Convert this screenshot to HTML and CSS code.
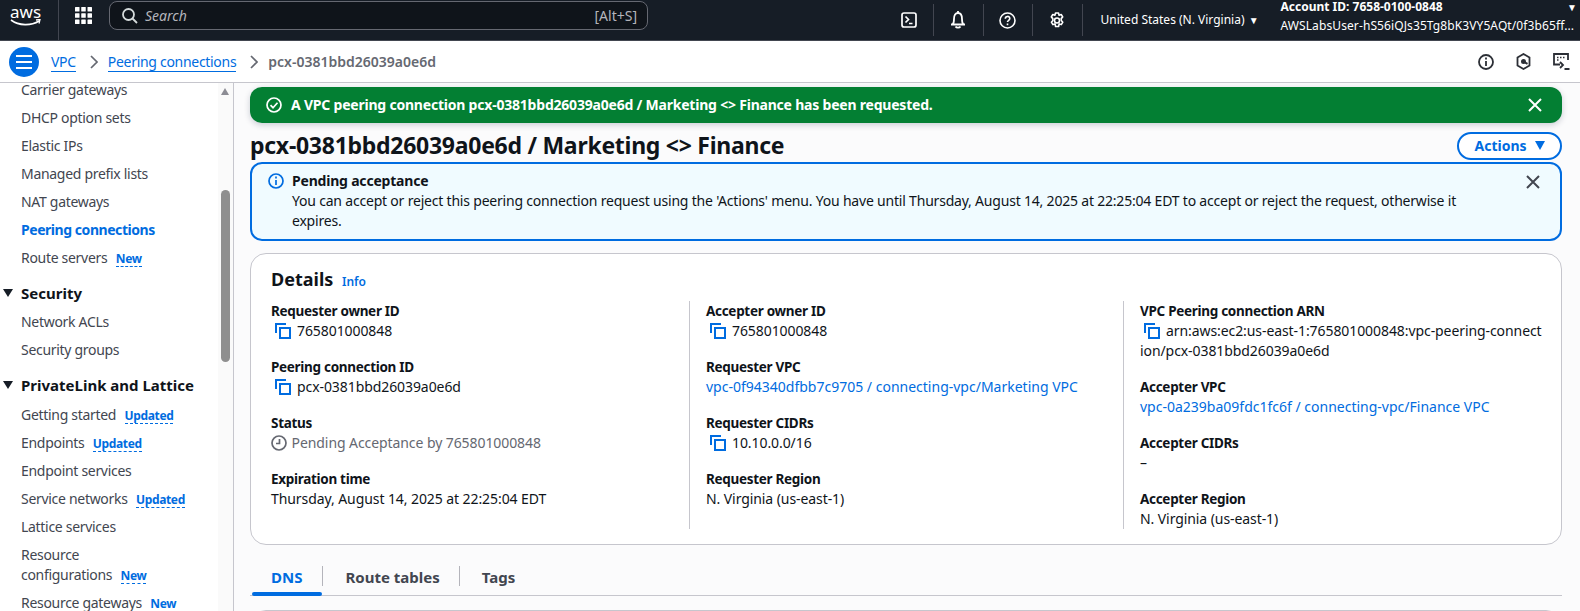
FILE: index.html
```html
<!DOCTYPE html>
<html>
<head>
    <title>Peering connection details</title>
    <link rel="stylesheet" href="styles.css">
</head>
<body>
    <svg class="defs" width="0" height="0">
        <symbol id="copy" viewBox="0 0 16 16">
            <path d="M1 10V1h10" fill="none" stroke="currentColor" stroke-width="2"/>
            <rect x="5" y="5" width="10" height="10" fill="none" stroke="currentColor" stroke-width="2"/>
        </symbol>
        <symbol id="close" viewBox="0 0 16 16">
            <path d="M2 2l12 12M14 2L2 14" fill="none" stroke="currentColor" stroke-width="2"/>
        </symbol>
    </svg>

    <header class="topbar">
        <div class="aws-logo">
            <span class="aws-word">aws</span>
            <svg width="32" height="8" viewBox="0 0 32 8"><path d="M1 1c8 6 20 6 28 1" fill="none" stroke="#fff" stroke-width="1.6"/><path d="M26 1l4-.5-1 4" fill="none" stroke="#fff" stroke-width="1.3"/></svg>
        </div>
        <span class="top-sep logo-sep"></span>
        <svg class="grid-icon" width="17" height="17" viewBox="0 0 17 17" fill="#fff">
            <rect x="0" y="0" width="4.500" height="4.500" rx=".5"/><rect x="6.250" y="0" width="4.500" height="4.500" rx=".5"/><rect x="12.500" y="0" width="4.500" height="4.500" rx=".5"/>
            <rect x="0" y="6.250" width="4.500" height="4.500" rx=".5"/><rect x="6.250" y="6.250" width="4.500" height="4.500" rx=".5"/><rect x="12.500" y="6.250" width="4.500" height="4.500" rx=".5"/>
            <rect x="0" y="12.500" width="4.500" height="4.500" rx=".5"/><rect x="6.250" y="12.500" width="4.500" height="4.500" rx=".5"/><rect x="12.500" y="12.500" width="4.500" height="4.500" rx=".5"/>
        </svg>
        <div class="search">
            <svg width="16" height="16" viewBox="0 0 16 16"><circle cx="6.5" cy="6.5" r="5.5" fill="none" stroke="#d5dbdb" stroke-width="1.8"/><path d="M10.5 10.5L15 15" stroke="#d5dbdb" stroke-width="1.8"/></svg>
            <span class="search-text">Search</span>
            <span class="search-key">[Alt+S]</span>
        </div>
        <div class="top-icons">
            <span class="top-icon">
                <svg width="16" height="16" viewBox="0 0 16 16" fill="none" stroke="#fff" stroke-width="1.700"><rect x="1" y="1" width="14" height="14" rx="2"/><path d="M4.500 4.500L7.500 7.500l-3 3M8 11.500h3.500"/></svg>
            </span>
            <span class="top-sep"></span>
            <span class="top-icon">
                <svg width="16" height="18" viewBox="0 0 16 18" fill="none" stroke="#fff" stroke-width="1.800"><path d="M8 0v2M1 13.500h14M2.500 13.500c1.200-1 1.500-2 1.500-5.500C4 4 5.500 2 8 2s4 2 4 6c0 3.500.3 4.500 1.500 5.500"/><path d="M5.500 15.500c1 1.500 4 1.500 5 0"/></svg>
            </span>
            <span class="top-sep"></span>
            <span class="top-icon">
                <svg width="17" height="17" viewBox="0 0 17 17" fill="none" stroke="#fff" stroke-width="1.600"><circle cx="8.500" cy="8.500" r="7.500"/><path d="M6.300 6.700c0-3 4.500-3 4.500-.2 0 1.800-2.300 1.800-2.300 3.600"/><path d="M8.500 11.500v1.700"/></svg>
            </span>
            <span class="top-sep"></span>
            <span class="top-icon">
                <svg width="16" height="17" viewBox="0 0 16 17" fill="none" stroke="#fff" stroke-width="1.600" stroke-linejoin="round"><path d="M6.500 1h3l.6 2.200 2.100-.7 1.500 2.400-1.500 1.700.1 1.900 1.500 1.700-1.500 2.400-2.100-.7-.6 2.600h-3l-.6-2.600-2.100.7-1.500-2.400 1.500-1.700-.1-1.900-1.500-1.700 1.500-2.400 2.100.7z"/><circle cx="8" cy="8.500" r="2.500"/></svg>
            </span>
            <span class="top-sep"></span>
        </div>
        <div class="region">United States (N. Virginia) <span class="caret">▼</span></div>
        <div class="account">
            <div class="account-id">Account ID: 7658-0100-0848</div>
            <div class="account-user">AWSLabsUser-hS56iQJs35Tg8bK3VY5AQt/0f3b65ff...</div>
        </div>
        <span class="account-caret">▼</span>
    </header>

    <nav class="crumbbar">
        <button class="burger"><span></span><span></span><span></span></button>
        <a class="crumb vpc-crumb">VPC</a>
        <svg class="chev" width="8" height="14" viewBox="0 0 8 14"><path d="M1 1l6 6-6 6" fill="none" stroke="#656871" stroke-width="1.700"/></svg>
        <a class="crumb">Peering connections</a>
        <svg class="chev" width="8" height="14" viewBox="0 0 8 14"><path d="M1 1l6 6-6 6" fill="none" stroke="#656871" stroke-width="1.700"/></svg>
        <span class="crumb-current">pcx-0381bbd26039a0e6d</span>
        <div class="crumb-icons">
            <svg width="16" height="16" viewBox="0 0 16 16" fill="none" stroke="#2c2f36" stroke-width="1.800"><circle cx="8" cy="8" r="7"/><path d="M8 7v5M8 3.500v2"/></svg>
            <svg width="15" height="17" viewBox="0 0 15 17" fill="none" stroke="#2c2f36" stroke-width="1.800"><path d="M7.500 1l6 3.500v8l-6 3.500-6-3.500v-8z"/><circle cx="7.500" cy="8.500" r="2.500" fill="#2c2f36" stroke="none"/><path d="M7.500 8.500l4 2.300" stroke-width="2"/></svg>
            <svg width="17" height="17" viewBox="0 0 17 17" fill="none" stroke="#2c2f36" stroke-width="1.800"><path d="M7 11.500H1V1h14v6"/><path d="M4 4.500h1.500M7 4.500h1.500M10 4.500h1.500M4 7h1.500" stroke-width="1.500"/><path d="M7 9l3 3-3 3M11.500 16h5"/></svg>
        </div>
    </nav>

    <div class="layout">
        <aside class="sidebar">
            <ul class="nav-list first-list">
                <li>Carrier gateways</li>
                <li>DHCP option sets</li>
                <li>Elastic IPs</li>
                <li>Managed prefix lists</li>
                <li>NAT gateways</li>
                <li class="active">Peering connections</li>
                <li>Route servers <span class="badge">New</span></li>
            </ul>
            <h3 class="nav-group">Security</h3>
            <ul class="nav-list">
                <li>Network ACLs</li>
                <li>Security groups</li>
            </ul>
            <h3 class="nav-group">PrivateLink and Lattice</h3>
            <ul class="nav-list">
                <li>Getting started <span class="badge">Updated</span></li>
                <li>Endpoints <span class="badge">Updated</span></li>
                <li>Endpoint services</li>
                <li>Service networks <span class="badge">Updated</span></li>
                <li>Lattice services</li>
                <li class="wrapped">Resource<br>configurations <span class="badge">New</span></li>
                <li>Resource gateways <span class="badge">New</span></li>
            </ul>
            <div class="scroll-track">
                <span class="scroll-up"></span>
                <span class="scroll-thumb"></span>
            </div>
        </aside>

        <main class="content">
            <div class="flash">
                <svg width="16" height="16" viewBox="0 0 16 16" fill="none" stroke="#fff" stroke-width="1.700"><circle cx="8" cy="8" r="7"/><path d="M4.500 8.200l2.500 2.500 4.500-5"/></svg>
                <span class="flash-text">A VPC peering connection pcx-0381bbd26039a0e6d / Marketing &lt;&gt; Finance has been requested.</span>
                <svg class="close" width="16" height="16"><use href="#close"/></svg>
            </div>

            <div class="title-row">
                <h1>pcx-0381bbd26039a0e6d / Marketing &lt;&gt; Finance</h1>
                <button class="actions">Actions <span class="actions-caret"></span></button>
            </div>

            <div class="alert">
                <svg class="alert-icon" width="16" height="16" viewBox="0 0 16 16" fill="none" stroke="#006ce0" stroke-width="1.700"><circle cx="8" cy="8" r="7"/><path d="M8 7v5M8 3.500v2"/></svg>
                <div class="alert-body">
                    <div class="alert-title">Pending acceptance</div>
                    <div>You can accept or reject this peering connection request using the 'Actions' menu. You have until Thursday, August 14, 2025 at 22:25:04 EDT to accept or reject the request, otherwise it expires.</div>
                </div>
                <svg class="close dark" width="16" height="16"><use href="#close"/></svg>
            </div>

            <section class="card">
                <h2>Details <a class="info">Info</a></h2>
                <div class="columns">
                    <div class="col">
                        <div class="field">
                            <div class="label">Requester owner ID</div>
                            <div class="value"><svg class="copy"><use href="#copy"/></svg>765801000848</div>
                        </div>
                        <div class="field">
                            <div class="label">Peering connection ID</div>
                            <div class="value"><svg class="copy"><use href="#copy"/></svg>pcx-0381bbd26039a0e6d</div>
                        </div>
                        <div class="field">
                            <div class="label">Status</div>
                            <div class="value status">
                                <svg class="clock" width="16" height="16" viewBox="0 0 16 16" fill="none" stroke="#656871" stroke-width="1.700"><circle cx="8" cy="8" r="7"/><path d="M8.500 4v4.500H5"/></svg>
                                Pending Acceptance by 765801000848
                            </div>
                        </div>
                        <div class="field">
                            <div class="label">Expiration time</div>
                            <div class="value">Thursday, August 14, 2025 at 22:25:04 EDT</div>
                        </div>
                    </div>
                    <div class="col">
                        <div class="field">
                            <div class="label">Accepter owner ID</div>
                            <div class="value"><svg class="copy"><use href="#copy"/></svg>765801000848</div>
                        </div>
                        <div class="field">
                            <div class="label">Requester VPC</div>
                            <div class="value"><a class="link">vpc-0f94340dfbb7c9705 / connecting-vpc/Marketing VPC</a></div>
                        </div>
                        <div class="field">
                            <div class="label">Requester CIDRs</div>
                            <div class="value"><svg class="copy"><use href="#copy"/></svg>10.10.0.0/16</div>
                        </div>
                        <div class="field">
                            <div class="label">Requester Region</div>
                            <div class="value">N. Virginia (us-east-1)</div>
                        </div>
                    </div>
                    <div class="col">
                        <div class="field">
                            <div class="label">VPC Peering connection ARN</div>
                            <div class="value"><svg class="copy"><use href="#copy"/></svg>arn:aws:ec2:us-east-1:765801000848:vpc-peering-connect<br>ion/pcx-0381bbd26039a0e6d</div>
                        </div>
                        <div class="field">
                            <div class="label">Accepter VPC</div>
                            <div class="value"><a class="link">vpc-0a239ba09fdc1fc6f / connecting-vpc/Finance VPC</a></div>
                        </div>
                        <div class="field">
                            <div class="label">Accepter CIDRs</div>
                            <div class="value">–</div>
                        </div>
                        <div class="field">
                            <div class="label">Accepter Region</div>
                            <div class="value">N. Virginia (us-east-1)</div>
                        </div>
                    </div>
                </div>
            </section>

            <div class="tabs">
                <a class="tab selected">DNS</a>
                <a class="tab">Route tables</a>
                <a class="tab">Tags</a>
            </div>
            <div class="next-card"></div>
        </main>
    </div>
</body>
</html>
```

FILE: styles.css
```css
* {
    margin: 0;
    padding: 0;
    box-sizing: border-box;
}

html, body {
    height: 611px;
    overflow: hidden;
}

body {
    font-family: "Noto Sans", "Open Sans", sans-serif;
    font-size: 14px;
    line-height: 20px;
    color: #0f141a;
    background-color: #fbfbfc;
}

.defs {
    display: block;
    height: 0;
}

/* Top bar */
.topbar {
    display: flex;
    align-items: center;
    height: 41px;
    padding-bottom: 9px;
    background-color: #161d26;
    color: #fff;
    border-bottom: 1px solid #424650;
    position: relative;
}

.aws-logo {
    width: 58px;
    padding-left: 10px;
    display: flex;
    flex-direction: column;
    line-height: 14px;
}

.aws-word {
    font-size: 17px;
    height: 14px;
}

.aws-logo svg {
    display: block;
}

.top-sep {
    width: 1px;
    height: 32px;
    background-color: #424650;
}

.logo-sep {
    height: 40px;
    margin-top: 9px;
}

.grid-icon {
    margin: 0 17px 0 16px;
}

.search {
    width: 539px;
    height: 29px;
    border: 1.5px solid #656871;
    border-radius: 8px;
    background-color: #0f141a;
    display: flex;
    align-items: center;
    padding: 0 10px 0 12px;
    color: #b4b4bb;
    font-size: 14px;
}

.search-text {
    margin-left: 7px;
    font-style: italic;
    flex: 1;
}

.top-icons {
    display: flex;
    align-items: center;
    margin-left: 237px;
    margin-top: 9px;
}

.top-icon {
    width: 48.500px;
    height: 32px;
    display: flex;
    align-items: center;
    justify-content: center;
}

.top-icons .top-icon:first-child {
    width: 48px;
}

.region {
    margin-left: 18px;
    margin-top: 9px;
    font-size: 12px;
    width: 180px;
    white-space: nowrap;
}

.caret {
    font-size: 10px;
    margin-left: 1px;
}

.account {
    font-size: 12px;
    line-height: 19px;
    white-space: nowrap;
}

.account-id {
    font-weight: 700;
}

.account-user {
    letter-spacing: 0.1px;
}

.account-caret {
    position: absolute;
    top: -3px;
    right: 3px;
    font-size: 10px;
}

/* Breadcrumbs */
.crumbbar {
    display: flex;
    align-items: center;
    height: 42px;
    padding: 0 10px 0 9px;
    background-color: #fff;
    border-bottom: 1px solid #c6c6cd;
}

.burger {
    width: 30px;
    height: 30px;
    border: none;
    border-radius: 50%;
    background-color: #006ce0;
    display: flex;
    flex-direction: column;
    justify-content: center;
    gap: 4px;
    padding: 0 7px;
    margin-right: 12px;
}

.burger span {
    display: block;
    height: 2px;
    background-color: #fff;
}

.crumb {
    color: #006ce0;
    border-bottom: 1px solid #006ce0;
    line-height: 19px;
    letter-spacing: -0.3px;
}

.chev {
    margin: 0 10px 0 14px;
}

.crumb-current {
    color: #656871;
    font-weight: 600;
}

.crumb-icons {
    margin-left: auto;
    display: flex;
    align-items: center;
    gap: 22px;
}

/* Side navigation */
.layout {
    display: flex;
    height: 528px;
    overflow: hidden;
}

.sidebar {
    width: 234px;
    flex-shrink: 0;
    background-color: #fff;
    border-right: 1px solid #c6c6cd;
    overflow: hidden;
    position: relative;
    color: #424650;
}

.nav-list {
    list-style: none;
    padding-left: 21px;
}

.nav-list li {
    height: 28px;
    line-height: 28px;
    white-space: nowrap;
    letter-spacing: -0.3px;
}

/* the list is scrolled, so the first row sits right under the bar */
.first-list li:first-child {
    height: 20.500px;
    line-height: 14px;
}

.nav-list li.wrapped {
    height: 48px;
    line-height: 20px;
    padding-top: 4px;
}

.nav-list li.active {
    color: #006ce0;
    font-weight: 700;
    letter-spacing: -0.45px;
}

.badge {
    display: inline-block;
    margin-left: 5px;
    font-size: 12px;
    line-height: 15px;
    font-weight: 700;
    letter-spacing: -0.35px;
    color: #006ce0;
    border-bottom: 1px dashed #006ce0;
}

.nav-group {
    position: relative;
    height: 36.750px;
    padding: 11px 0 0 21px;
    font-size: 15px;
    line-height: 20px;
    font-weight: 700;
    color: #0f141a;
}

.nav-group::before {
    content: "";
    position: absolute;
    left: 3px;
    top: 17px;
    border-left: 5px solid transparent;
    border-right: 5px solid transparent;
    border-top: 8px solid #161d26;
}

.scroll-track {
    position: absolute;
    top: 0;
    right: 0;
    bottom: 0;
    width: 15px;
    background-color: #fafafa;
}

.scroll-up {
    position: absolute;
    left: 3px;
    top: 5px;
    border-left: 4px solid transparent;
    border-right: 4px solid transparent;
    border-bottom: 7px solid #8c8c94;
}

.scroll-thumb {
    position: absolute;
    left: 3px;
    top: 107px;
    width: 9px;
    height: 172px;
    border-radius: 5px;
    background-color: #8f8f8f;
}

/* Main content */
.content {
    flex: 1;
    min-width: 0;
    padding: 4px 18px 0 16px;
}

.flash {
    display: flex;
    align-items: center;
    height: 36px;
    padding: 0 19px 0 16px;
    border-radius: 12px;
    background-color: #037f33;
    color: #fff;
    font-weight: 700;
    box-shadow: 0 2px 6px rgba(0, 27, 54, 0.2);
}

.flash-text {
    margin-left: 9px;
    flex: 1;
    letter-spacing: -0.21px;
}

.close {
    color: #fff;
    display: block;
}

.close.dark {
    color: #424650;
    margin-top: 3px;
    flex-shrink: 0;
}

.title-row {
    display: flex;
    align-items: center;
    justify-content: space-between;
    height: 39px;
    padding-top: 5px;
}

h1 {
    font-size: 23px;
    line-height: 28px;
    font-weight: 700;
    letter-spacing: -0.27px;
}

.actions {
    width: 105px;
    height: 28px;
    border: 2px solid #006ce0;
    border-radius: 20px;
    background-color: #fff;
    color: #006ce0;
    font-family: inherit;
    font-size: 14px;
    font-weight: 700;
    display: flex;
    align-items: center;
    justify-content: center;
    gap: 8px;
    margin-top: 1px;
}

.actions-caret {
    border-left: 5.500px solid transparent;
    border-right: 5.500px solid transparent;
    border-top: 9px solid #006ce0;
}

.alert {
    display: flex;
    height: 79px;
    padding: 7px 19px 0 16px;
    border: 2px solid #006ce0;
    border-radius: 12px;
    background-color: #f0fbff;
    letter-spacing: -0.2px;
}

.alert-icon {
    flex-shrink: 0;
    margin: 2px 8px 0 0;
}

.alert-body {
    flex: 1;
    padding-right: 50px;
}

.alert-title {
    font-weight: 700;
}

.card {
    margin-top: 12px;
    height: 292px;
    padding: 13px 20px 0;
    border: 1px solid #c6c6cd;
    border-radius: 16px;
    background-color: #fff;
}

h2 {
    font-size: 18px;
    line-height: 24px;
    font-weight: 700;
}

.info {
    margin-left: 4px;
    font-size: 12px;
    font-weight: 600;
    color: #006ce0;
}

.columns {
    display: grid;
    grid-template-columns: 418px 434px minmax(0, 1fr);
    margin-top: 7px;
}

.col {
    height: 228px;
    padding: 0 10px 0 16px;
    border-left: 1px solid #c6c6cd;
}

.col:first-child {
    border-left: none;
    padding-left: 0;
    padding-right: 27px;
}

.field {
    margin-bottom: 16px;
}

.label {
    font-size: 13.500px;
    font-weight: 700;
    letter-spacing: -0.3px;
}

.value {
    white-space: nowrap;
    letter-spacing: -0.08px;
}

.copy {
    width: 16px;
    height: 16px;
    color: #006ce0;
    margin: 0 6px 0 4px;
    vertical-align: -3px;
}

.status {
    color: #656871;
}

.clock {
    vertical-align: -3px;
    margin-right: 1px;
}

.link {
    color: #006ce0;
    letter-spacing: 0;
}

.tabs {
    display: flex;
    height: 51px;
    padding-top: 17px;
    border-bottom: 1px solid #c6c6cd;
}

.tab {
    position: relative;
    height: 33px;
    padding: 5px 19px 0 23px;
    font-size: 15px;
    font-weight: 700;
    color: #424650;
    white-space: nowrap;
}

.tab + .tab::before {
    content: "";
    position: absolute;
    left: 0;
    top: 4px;
    height: 20px;
    width: 1px;
    background-color: #b4b4bb;
}

.tab.selected {
    color: #006ce0;
    padding: 5px 20px 0 21px;
}

.tab.selected::after {
    content: "";
    position: absolute;
    left: 2px;
    right: 0;
    bottom: -1px;
    height: 4px;
    border-radius: 2px;
    background-color: #006ce0;
}

.next-card {
    margin-top: 14px;
    height: 40px;
    border: 1px solid #c6c6cd;
    border-radius: 16px;
    background-color: #fff;
}
```
